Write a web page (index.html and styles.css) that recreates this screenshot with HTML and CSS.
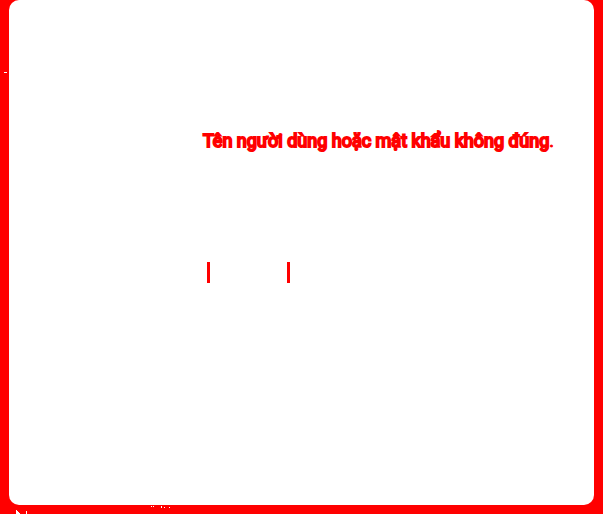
FILE: index.html
```html
<!DOCTYPE html>
<html lang="vi">
<head>
<meta charset="utf-8">
<title>Đăng nhập</title>
<link rel="stylesheet" href="styles.css">
</head>
<body>
<main class="panel">
<p class="message" role="alert">Tên người dùng hoặc mật khẩu không đúng<span class="stop">.</span></p>
<div class="field"></div>
</main>
<svg class="edge-mark" width="3" height="1" aria-hidden="true"><rect width="3" height="1" fill="#fff"/></svg>
<svg class="base-marks" width="180" height="9" shape-rendering="crispEdges" aria-hidden="true">
<path d="M16 5h1v1h1v1h1v1h1v1h-4zM26 6h1v3h-1zM151 1h1v1h-1zM153 1h1v1h-1zM161 1h1v2h-1zM164 2h1v1h-1zM169 2h1v1h-1z" fill="#fff"/>
</svg>
</body>
</html>
```
FILE: styles.css
```css
* {
  box-sizing: border-box;
}

body {
  position: relative;
  display: flex;
  min-height: 100vh;
  margin: 0;
  padding: 0 9px 9px;
  background: #f00;
  font-family: Roboto, sans-serif;
}

.panel {
  flex: 1;
  min-width: 0;
  padding: 129px 24px 48px 194px;
  border-radius: 10px;
  background: #fff;
}

.message {
  margin: 0;
  color: #f00;
  font-size: 18px;
  line-height: 24px;
  white-space: nowrap;
  -webkit-text-stroke: 2px #f00;
}

.stop {
  -webkit-text-stroke: 1px #f00;
}

.field {
  width: 83px;
  height: 21px;
  margin: 109px 0 0 4px;
  border: solid #f00;
  border-width: 0 3px;
}

.edge-mark {
  position: absolute;
  top: 72px;
  left: 4px;
}

.base-marks {
  position: absolute;
  bottom: 0;
  left: 0;
}
```
